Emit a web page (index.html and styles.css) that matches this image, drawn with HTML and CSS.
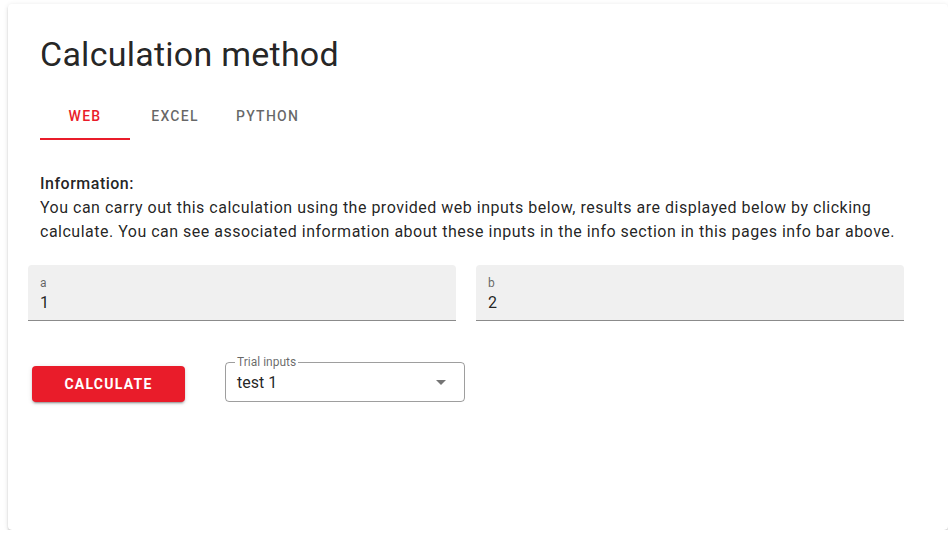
FILE: index.html
```html
<!DOCTYPE html>
<html lang="en">
<head>
<meta charset="utf-8">
<title>Calculation method</title>
<link rel="stylesheet" href="styles.css">
</head>
<body>
<div class="card">
  <h1 class="title">Calculation method</h1>
  <div class="tabs">
    <div class="tab active">Web</div>
    <div class="tab">Excel</div>
    <div class="tab">Python</div>
  </div>
  <div class="info">
    <div class="info-head">Information:</div>
    <div class="info-body">You can carry out this calculation using the provided web inputs below, results are displayed below by clicking calculate. You can see associated information about these inputs in the info section in this pages info bar above.</div>
  </div>
  <div class="fields">
    <div class="filled">
      <div class="filled-label">a</div>
      <div class="filled-value">1</div>
    </div>
    <div class="filled">
      <div class="filled-label">b</div>
      <div class="filled-value">2</div>
    </div>
  </div>
  <div class="actions">
    <button class="btn">Calculate</button>
    <div class="select">
      <span class="select-label">Trial inputs</span>
      <span class="select-value">test 1</span>
      <svg class="select-arrow" width="10" height="5" viewBox="0 0 10 5"><path d="M0 0 L5 5 L10 0 Z" fill="rgba(0,0,0,0.54)"/></svg>
    </div>
  </div>
</div>
</body>
</html>
```

FILE: styles.css
```css
html, body {
  margin: 0;
  padding: 0;
  background: #ffffff;
  overflow: hidden;
}
body {
  font-family: Roboto, "Liberation Sans", Arial, sans-serif;
  color: rgba(0, 0, 0, 0.87);
}
.card {
  margin: 4px 0 0 8px;
  height: 526px;
  box-sizing: border-box;
  padding: 30px 32px 0 32px;
  background: #fff;
  border-radius: 4px;
  box-shadow: 0 3px 1px -2px rgba(0,0,0,0.2), 0 2px 2px 0 rgba(0,0,0,0.14), 0 1px 5px 0 rgba(0,0,0,0.12);
}
.title {
  margin: 0;
  font-size: 34px;
  line-height: 40px;
  font-weight: 400;
  letter-spacing: 0.0073em;
}
.tabs {
  display: flex;
  margin-top: 18px;
  height: 48px;
}
.tab {
  min-width: 90px;
  padding: 2px 16px 0 16px;
  box-sizing: border-box;
  display: flex;
  align-items: center;
  justify-content: center;
  font-size: 14px;
  font-weight: 500;
  letter-spacing: 0.0892em;
  text-transform: uppercase;
  color: rgba(0, 0, 0, 0.6);
  border-bottom: 2px solid transparent;
}
.tab.active {
  color: #e91c2a;
  border-bottom-color: #e91c2a;
}
.info {
  margin-top: 32px;
  font-size: 16px;
  line-height: 24px;
  letter-spacing: 0.03125em;
}
.info-head {
  font-weight: 500;
}
.info-body {
  padding-right: 20px;
}
.fields {
  display: grid;
  grid-template-columns: 428px 428px;
  column-gap: 20px;
  margin: 21px 0 0 -12px;
}
.filled {
  height: 56px;
  box-sizing: border-box;
  background: #f0f0f0;
  border-radius: 4px 4px 0 0;
  border-bottom: 1px solid rgba(0, 0, 0, 0.42);
  padding: 11px 12px 0 12px;
}
.filled-label {
  font-size: 12px;
  line-height: 14px;
  color: rgba(0, 0, 0, 0.6);
}
.filled-value {
  font-size: 16px;
  line-height: 26px;
}
.actions {
  display: flex;
  align-items: center;
  margin-top: 41px;
  margin-left: -8px;
}
.btn {
  width: 153px;
  height: 36px;
  margin-top: 4px;
  padding: 0 0 1px 0;
  border: none;
  border-radius: 4px;
  background: #e91c2a;
  color: #fff;
  font-family: inherit;
  font-size: 14px;
  font-weight: 700;
  letter-spacing: 0.0892em;
  text-transform: uppercase;
  box-shadow: 0 3px 1px -2px rgba(0,0,0,0.2), 0 2px 2px 0 rgba(0,0,0,0.14), 0 1px 5px 0 rgba(0,0,0,0.12);
}
.select {
  position: relative;
  margin-left: 40px;
  width: 240px;
  height: 40px;
  box-sizing: border-box;
  border: 1px solid rgba(0, 0, 0, 0.38);
  border-radius: 4px;
  display: flex;
  align-items: center;
  padding: 0 18px 0 11px;
}
.select-label {
  position: absolute;
  left: 9px;
  top: -8px;
  padding: 0 2px;
  background: #fff;
  font-size: 12px;
  line-height: 14px;
  color: rgba(0, 0, 0, 0.6);
}
.select-value {
  flex: 1;
  font-size: 16px;
  line-height: 22px;
  margin-top: 2px;
}
.select-arrow {
  display: block;
}
```
